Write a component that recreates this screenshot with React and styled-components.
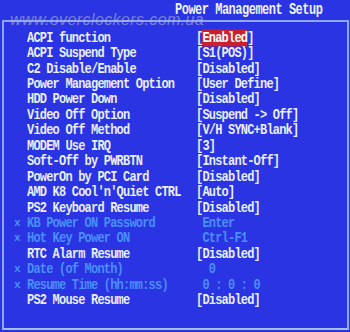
import styled, { createGlobalStyle } from "styled-components";

const GlobalStyle = createGlobalStyle`
  html, body {
    margin: 0;
    padding: 0;
    background: #2a34e2;
  }
`;

const items = [
  { label: "ACPI function", value: "Enabled", selected: true },
  { label: "ACPI Suspend Type", value: "[S1(POS)]" },
  { label: "C2 Disable/Enable", value: "[Disabled]" },
  { label: "Power Management Option", value: "[User Define]" },
  { label: "HDD Power Down", value: "[Disabled]" },
  { label: "Video Off Option", value: "[Suspend -> Off]" },
  { label: "Video Off Method", value: "[V/H SYNC+Blank]" },
  { label: "MODEM Use IRQ", value: "[3]" },
  { label: "Soft-Off by PWRBTN", value: "[Instant-Off]" },
  { label: "PowerOn by PCI Card", value: "[Disabled]" },
  { label: "AMD K8 Cool'n'Quiet CTRL", value: "[Auto]" },
  { label: "PS2 Keyboard Resume", value: "[Disabled]" },
  { label: "KB Power ON Password", value: " Enter", dim: true },
  { label: "Hot Key Power ON", value: " Ctrl-F1", dim: true },
  { label: "RTC Alarm Resume", value: "[Disabled]" },
  { label: "Date (of Month)", value: "  0", dim: true },
  { label: "Resume Time (hh:mm:ss)", value: " 0 : 0 : 0", dim: true },
  { label: "PS2 Mouse Resume", value: "[Disabled]" },
];

const Screen = styled.div`
  position: relative;
  width: 350px;
  height: 332px;
  overflow: hidden;
  background: #2a34e2;
  font-family: "Liberation Mono", "DejaVu Sans Mono", monospace;
  font-weight: 700;
  display: flex;
  flex-direction: column;
`;

const Header = styled.div`
  height: 20px;
  display: flex;
  align-items: center;
  padding-left: 175px;
`;

const Title = styled.span`
  display: inline-block;
  color: #eef2ff;
  font-size: 12px;
  letter-spacing: -0.5px;
  white-space: pre;
  transform: scaleY(1.3);
  transform-origin: center;
`;

const Watermark = styled.span`
  position: absolute;
  left: 10px;
  top: 11px;
  font-family: "Liberation Sans", Arial, sans-serif;
  font-style: italic;
  font-weight: 400;
  font-size: 16px;
  letter-spacing: 0.4px;
  color: rgba(175, 180, 205, 0.6);
`;

const Panel = styled.div`
  flex: 1;
  margin: 0 1px 2px 2px;
  border: 2px solid #8fa6f2;
  border-bottom-color: #a9bcf4;
  padding-top: 8px;
  display: flex;
  flex-direction: column;
`;

const Row = styled.div`
  display: grid;
  grid-template-columns: 23px 169px 1fr;
  height: 15.45px;
  align-items: center;
  font-size: 12px;
  letter-spacing: -0.8px;
  white-space: pre;
  color: ${(p) => (p.$dim ? "#4a8ffc" : "#e8eeff")};
`;

const Text = styled.span`
  display: inline-block;
  white-space: pre;
  transform: scaleY(1.2);
  transform-origin: center;
`;

const Marker = styled.span`
  padding-left: 10px;
  font-size: 11px;
`;

const Selected = styled.span`
  background: #cc1f2c;
  color: #ffffff;
`;

export default function App() {
  return (
    <>
      <GlobalStyle />
      <Screen>
        <Header>
          <Title>Power Management Setup</Title>
        </Header>
        <Watermark>www.overclockers.com.ua</Watermark>
        <Panel>
          {items.map((it) => (
            <Row key={it.label} $dim={it.dim}>
              <Marker>{it.dim ? "x" : ""}</Marker>
              <Text>{it.label}</Text>
              <Text>
                {it.selected ? (
                  <>
                    [<Selected>{it.value}</Selected>]
                  </>
                ) : (
                  it.value
                )}
              </Text>
            </Row>
          ))}
        </Panel>
      </Screen>
    </>
  );
}
